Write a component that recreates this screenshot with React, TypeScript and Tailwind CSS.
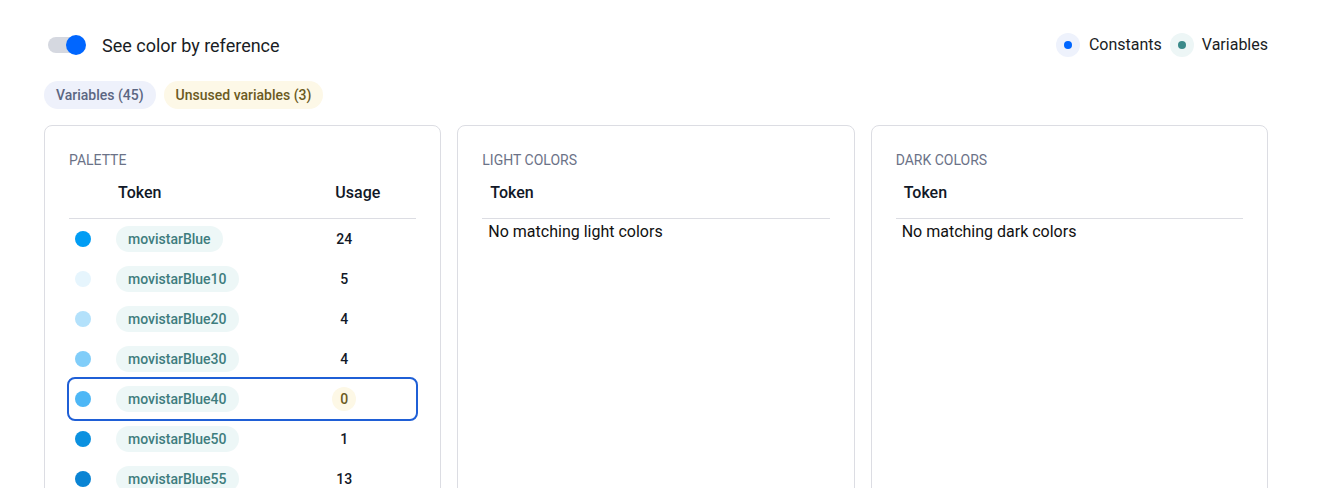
import React from "react";

type Row = { name: string; color: string; usage: number };

const palette: Row[] = [
  { name: "movistarBlue", color: "#019df4", usage: 24 },
  { name: "movistarBlue10", color: "#e6f5fd", usage: 5 },
  { name: "movistarBlue20", color: "#b3e1fb", usage: 4 },
  { name: "movistarBlue30", color: "#80cdf9", usage: 4 },
  { name: "movistarBlue40", color: "#4db7f6", usage: 0 },
  { name: "movistarBlue50", color: "#0b91e0", usage: 1 },
  { name: "movistarBlue55", color: "#0a84d4", usage: 13 },
  { name: "movistarBlue60", color: "#0878c4", usage: 2 },
];

function EmptyCard({ title, text }: { title: string; text: string }) {
  return (
    <div className="flex-1 rounded-lg border border-[#dcdde3] px-6 pt-[26px] pb-6">
      <div className="text-[14px] uppercase text-[#6b7287] leading-4">{title}</div>
      <div className="border-b border-[#dcdde3] h-[51px] flex items-center px-2 text-[16px] font-medium text-[#111827]">
        Token
      </div>
      <div className="px-[6px] pt-[1px] text-[16px] text-[#111]">{text}</div>
    </div>
  );
}

export default function App() {
  return (
    <div className="w-[1317px] h-[488px] overflow-hidden bg-white pl-[44px] pr-[49px] pt-[34px] font-['Roboto',sans-serif]">
      {/* top bar */}
      <div className="flex items-center justify-between h-[22px]">
        <div className="flex items-center">
          <div className="relative ml-[4px] w-[38px] h-[22px] flex items-center">
            <div className="w-[36px] h-[16px] rounded-full bg-[#d5d8e0]" />
            <div className="absolute right-0 top-[1px] w-[20px] h-[20px] rounded-full bg-[#0066ff]" />
          </div>
          <span className="ml-[16px] text-[18px] text-[#1a1d24]">See color by reference</span>
        </div>
        <div className="flex items-center gap-[8px] text-[16px] text-[#1a1d24]">
          <div className="flex items-center gap-[9px]">
            <div className="w-[24px] h-[24px] rounded-full bg-[#eef2fc] flex items-center justify-center">
              <div className="w-[8px] h-[8px] rounded-full bg-[#0066ff]" />
            </div>
            <span>Constants</span>
          </div>
          <div className="flex items-center gap-[8px]">
            <div className="w-[24px] h-[24px] rounded-full bg-[#edf6f6] flex items-center justify-center">
              <div className="w-[8px] h-[8px] rounded-full bg-[#3b8a8a]" />
            </div>
            <span>Variables</span>
          </div>
        </div>
      </div>

      {/* tabs */}
      <div className="mt-[25px] flex gap-[8px]">
        <span className="h-[28px] px-[12px] rounded-full bg-[#eef1fb] text-[14px] font-medium text-[#5b6682] flex items-center">
          Variables (45)
        </span>
        <span className="h-[28px] px-[12px] rounded-full bg-[#fdf8e7] text-[14px] font-medium text-[#6b5a22] flex items-center">
          Unsused variables (3)
        </span>
      </div>

      {/* cards */}
      <div className="mt-[16px] flex gap-[16px]">
        <div className="flex-1 rounded-lg border border-[#dcdde3] px-6 pt-[26px] pb-6">
          <div className="text-[14px] uppercase text-[#6b7287] leading-4">Palette</div>
          <div className="border-b border-[#dcdde3] h-[51px] flex items-center text-[16px] font-medium text-[#111827]">
            <span className="ml-[49px]">Token</span>
            <span className="ml-auto mr-[36px]">Usage</span>
          </div>
          {palette.map((r) => {
            const hl = r.usage === 0;
            return (
              <div
                key={r.name}
                className={`h-[40px] flex items-center px-[6px] ${hl ? "outline-2 outline-[#1f5fd6] rounded-md" : ""}`}
              >
                <div className="w-[16px] h-[16px] rounded-full" style={{ background: r.color }} />
                <span className="ml-[25px] h-[26px] px-[12px] rounded-full bg-[#edf7f7] text-[14px] font-medium text-[#3e7d7e] flex items-center">
                  {r.name}
                </span>
                <span className="ml-auto w-[94px] flex">
                  {hl ? (
                    <span className="ml-[16px] inline-flex w-[24px] h-[24px] rounded-full bg-[#fdf8e6] text-[14px] font-medium text-[#6b5a22] items-center justify-center">
                      0
                    </span>
                  ) : (
                    <span className="ml-[16px] inline-block w-[24px] text-center text-[14px] font-medium text-[#111827]">
                      {r.usage}
                    </span>
                  )}
                </span>
              </div>
            );
          })}
        </div>
        <EmptyCard title="Light colors" text="No matching light colors" />
        <EmptyCard title="Dark colors" text="No matching dark colors" />
      </div>
    </div>
  );
}
